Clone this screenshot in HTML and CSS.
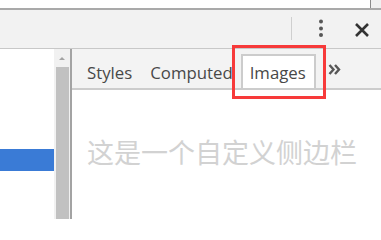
FILE: index.html
```html
<!DOCTYPE html>
<html lang="zh">
<head>
<meta charset="utf-8">
<link rel="stylesheet" href="styles.css">
</head>
<body>
<div class="page">
  <div class="topbar"><div class="corner"></div></div>
  <div class="toolbar">
    <div class="sep"></div>
    <svg class="kebab" width="6" height="20" viewBox="0 0 6 20"><circle cx="3" cy="2.5" r="2"/><circle cx="3" cy="9.5" r="2"/><circle cx="3" cy="16" r="2"/></svg>
    <svg class="close" width="14" height="14" viewBox="0 0 14 14"><path d="M1 1 L13 13 M13 1 L1 13"/></svg>
  </div>
  <div class="main">
    <div class="left"><div class="selected"></div></div>
    <div class="scrollbar">
      <div class="arrow"></div>
      <div class="thumb"></div>
    </div>
    <div class="divider"></div>
    <div class="right">
      <div class="tabbar">
        <div class="tab">Styles</div>
        <div class="tab computed">Computed</div>
        <div class="tab active">Images</div>
        <svg class="more" width="13" height="11" viewBox="0 0 13 11"><path d="M1.5 1 L5.5 5.5 L1.5 10 M7 1 L11 5.5 L7 10"/></svg>
      </div>
      <div class="content">
        <div class="placeholder">这是一个自定义侧边栏</div>
      </div>
    </div>
  </div>
  <div class="highlight"></div>
</div>
</body>
</html>
```
FILE: styles.css
```css
html, body {
  margin: 0;
  padding: 0;
  background: #ffffff;
}
.page {
  position: relative;
  width: 381px;
  height: 219px;
  overflow: hidden;
  font-family: "Open Sans", "Noto Sans", sans-serif;
  display: flex;
  flex-direction: column;
}
.topbar {
  height: 8px;
  background: #ffffff;
  border-bottom: 2px solid #a9a9a9;
  display: flex;
  justify-content: flex-end;
}
.corner {
  width: 11px;
  height: 8px;
  background: #f0f0f0;
  border-left: 1px solid #8a8a8a;
  box-sizing: border-box;
}
.toolbar {
  height: 38px;
  background: #f2f2f2;
  border-bottom: 1px solid #c8c8c8;
  display: flex;
  align-items: center;
  justify-content: flex-end;
  padding-right: 12px;
}
.sep {
  width: 1px;
  height: 23px;
  background: #cfcfcf;
  margin-right: 26px;
  margin-top: -1px;
}
.kebab {
  fill: #575757;
  margin-right: 31px;
}
.close {
  stroke: #333333;
  stroke-width: 2.6;
  fill: none;
  margin-top: 1px;
}
.main {
  flex: 1;
  display: flex;
}
.left {
  width: 54px;
  background: #ffffff;
  padding-top: 100px;
}
.selected {
  height: 22px;
  background: #3a7bd6;
}
.scrollbar {
  width: 16px;
  background: #f1f1f1;
  display: flex;
  flex-direction: column;
  align-items: center;
}
.arrow {
  width: 0;
  height: 0;
  border-left: 3px solid transparent;
  border-right: 3px solid transparent;
  border-bottom: 3px solid #a3a3a3;
  margin-top: 8px;
}
.thumb {
  width: 13px;
  flex: 1;
  background: #c1c1c1;
  margin-top: 7px;
}
.divider {
  width: 2px;
  background: #a3a3a3;
}
.right {
  flex: 1;
  display: flex;
  flex-direction: column;
}
.tabbar {
  height: 34px;
  padding-top: 5px;
  padding-left: 6px;
  background: #f3f3f3;
  border-bottom: 2px solid #cccccc;
  display: flex;
  align-items: stretch;
}
.tab {
  font-size: 16.8px;
  line-height: 20px;
  color: #484848;
  padding: 9px 9px 0 9px;
}
.tab.computed {
  padding-right: 8px;
}
.tab.active {
  background: #ffffff;
  border: 2px solid #cccccc;
  border-bottom: none;
  padding: 7px 8px 0 7px;
}
.more {
  fill: none;
  stroke: #575757;
  stroke-width: 2.4;
  margin-left: 12px;
  margin-top: 10px;
}
.content {
  flex: 1;
  background: #ffffff;
}
.placeholder {
  font-family: "Noto Sans CJK SC", "Noto Sans", sans-serif;
  font-size: 27px;
  line-height: 27px;
  color: #d2d2d2;
  margin-top: 48px;
  padding-left: 15px;
  white-space: nowrap;
}
.highlight {
  position: absolute;
  left: 232px;
  top: 45px;
  width: 94px;
  height: 54px;
  box-sizing: border-box;
  border: 3px solid #f73a3a;
}
```
